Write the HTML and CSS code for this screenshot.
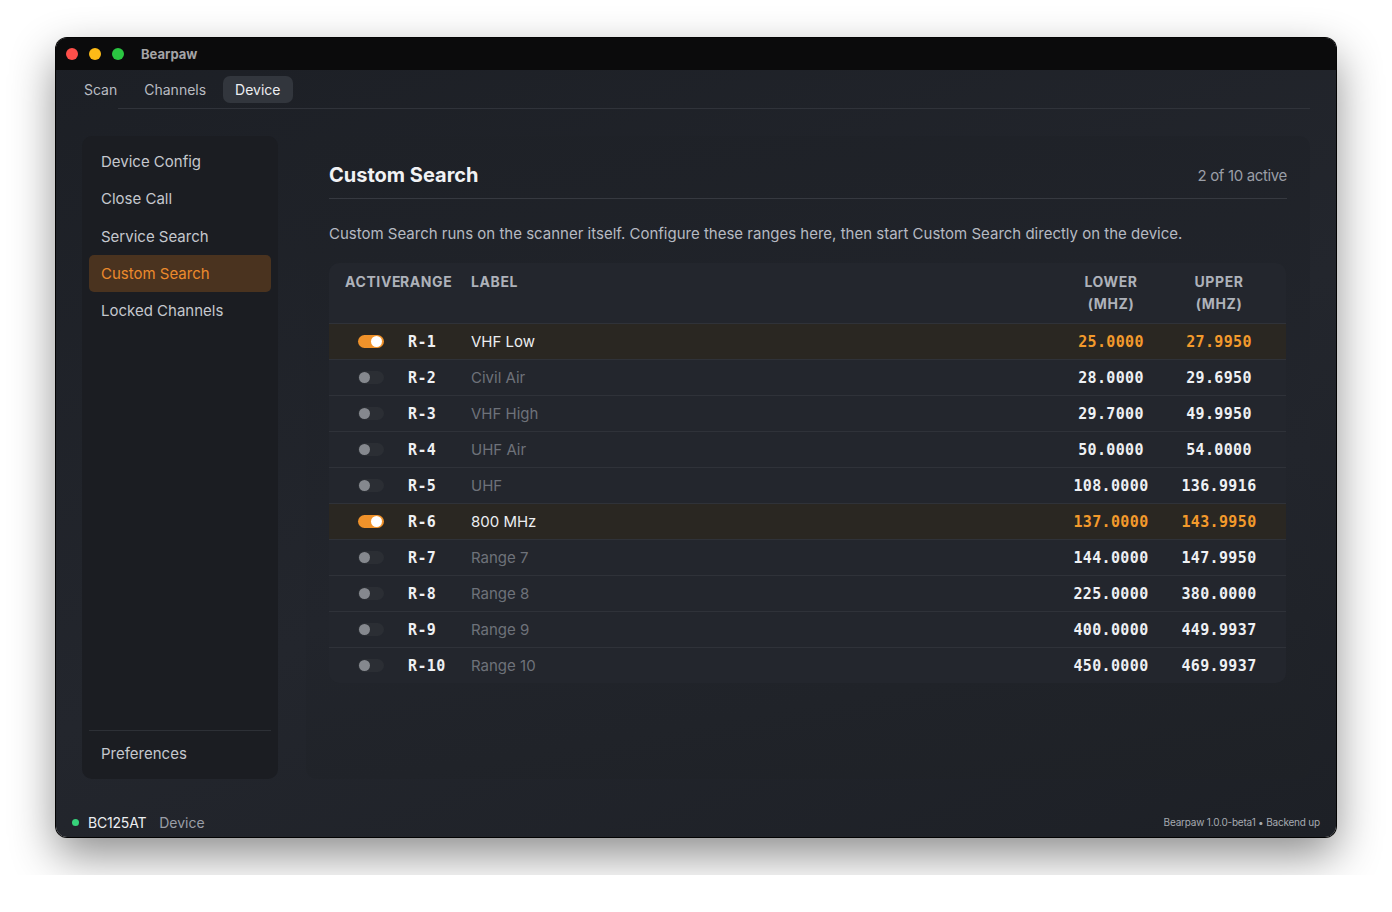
FILE: index.html
```html
<!DOCTYPE html>
<html lang="en">
  <head>
    <meta charset="UTF-8" />
    <meta name="viewport" content="width=device-width, initial-scale=1.0" />
    <title>Bearpaw</title>
    <link rel="stylesheet" href="styles.css">
  </head>
  <body>
    <div class="window">
      <div class="titlebar">
        <span class="light red"></span>
        <span class="light yellow"></span>
        <span class="light green"></span>
        <span class="app-name">Bearpaw</span>
      </div>

      <div class="tabs">
        <span class="tab">Scan</span>
        <span class="tab">Channels</span>
        <span class="tab active">Device</span>
      </div>

      <div class="content">
        <aside class="sidebar">
          <nav class="side-nav">
            <div class="side-item">Device Config</div>
            <div class="side-item">Close Call</div>
            <div class="side-item">Service Search</div>
            <div class="side-item active">Custom Search</div>
            <div class="side-item">Locked Channels</div>
          </nav>
          <div class="side-bottom">
            <div class="side-item">Preferences</div>
          </div>
        </aside>

        <main class="panel">
          <div class="panel-head">
            <h1>Custom Search</h1>
            <span class="count">2 of 10 active</span>
          </div>
          <p class="desc">Custom Search runs on the scanner itself. Configure these ranges here, then start Custom Search directly on the device.</p>

          <div class="ranges">
            <div class="row head">
              <span>Active</span>
              <span>Range</span>
              <span>Label</span>
              <span class="num">Lower<br />(MHz)</span>
              <span class="num">Upper<br />(MHz)</span>
            </div>
            <div id="rows"></div>
          </div>
        </main>
      </div>

      <div class="statusbar">
        <span class="dot"></span>
        <span class="device">BC125AT</span>
        <span class="mode">Device</span>
        <span class="version">Bearpaw 1.0.0-beta1 • Backend up</span>
      </div>
    </div>

    <script>
      const ranges = [
        { id: "R-1", label: "VHF Low", lower: "25.0000", upper: "27.9950", on: true },
        { id: "R-2", label: "Civil Air", lower: "28.0000", upper: "29.6950", on: false },
        { id: "R-3", label: "VHF High", lower: "29.7000", upper: "49.9950", on: false },
        { id: "R-4", label: "UHF Air", lower: "50.0000", upper: "54.0000", on: false },
        { id: "R-5", label: "UHF", lower: "108.0000", upper: "136.9916", on: false },
        { id: "R-6", label: "800 MHz", lower: "137.0000", upper: "143.9950", on: true },
        { id: "R-7", label: "Range 7", lower: "144.0000", upper: "147.9950", on: false },
        { id: "R-8", label: "Range 8", lower: "225.0000", upper: "380.0000", on: false },
        { id: "R-9", label: "Range 9", lower: "400.0000", upper: "449.9937", on: false },
        { id: "R-10", label: "Range 10", lower: "450.0000", upper: "469.9937", on: false },
      ];

      document.getElementById("rows").innerHTML = ranges
        .map(
          (r) => `
            <div class="row${r.on ? " on" : ""}">
              <span><span class="toggle"><span class="knob"></span></span></span>
              <span class="rid">${r.id}</span>
              <span class="label">${r.label}</span>
              <span class="num freq">${r.lower}</span>
              <span class="num freq">${r.upper}</span>
            </div>
          `
        )
        .join("");
    </script>
  </body>
</html>
```

FILE: styles.css
```css
body {
  margin: 0;
  padding: 38px 56px;
  background-color: #ffffff;
  font-family: Inter, "Noto Sans", sans-serif;
}

.window {
  height: 799px;
  display: flex;
  flex-direction: column;
  border-radius: 11px;
  overflow: hidden;
  background: linear-gradient(160deg, #1c1f25 0%, #23262d 55%, #1d2026 100%);
  box-shadow: 0 18px 45px rgba(0, 0, 0, 0.45), 0 0 0 1px #050505;
}

.titlebar {
  height: 32px;
  flex: none;
  display: flex;
  align-items: center;
  padding-left: 10px;
  background-color: #0b0b0c;
}

.light {
  width: 12px;
  height: 12px;
  border-radius: 50%;
  margin-right: 11px;
}

.red { background-color: #fe4f4a; }
.yellow { background-color: #fdbb17; }
.green { background-color: #2ac641; }

.app-name {
  margin-left: 6px;
  font-size: 13px;
  font-weight: 700;
  color: #a4a4a6;
}

.tabs {
  height: 39px;
  flex: none;
  display: flex;
  align-items: center;
  gap: 11px;
  margin: 0 26px 0 20px;
  position: relative;
}

/* underline starts a bit in from the left edge */
.tabs::after {
  content: "";
  position: absolute;
  left: 42px;
  right: 0;
  bottom: 0;
  height: 1px;
  background-color: #30333a;
}

.tab {
  padding: 5px 8px;
  font-size: 14px;
  color: #b9bcc2;
  border-radius: 7px;
}

.tab.active {
  margin-left: -2px;
  padding: 5px 12px;
  background-color: #32363d;
  color: #eceef1;
}

.content {
  flex: 1;
  display: flex;
  gap: 28px;
  padding: 27px 26px 0 26px;
  min-height: 0;
}

.sidebar {
  width: 196px;
  flex: none;
  display: flex;
  flex-direction: column;
  justify-content: space-between;
  padding: 7px 7px 7px;
  box-sizing: border-box;
  background-color: #1b1d22;
  border-radius: 10px;
}

.side-item {
  padding: 9px 12px;
  line-height: 19.3px;
  font-size: 15px;
  color: #c5c8ce;
  border-radius: 5px;
}

.side-item.active {
  background-color: #4a331f;
  color: #ec8a2c;
}

.side-bottom {
  border-top: 1px solid #2d3036;
  padding-top: 4px;
}

.panel {
  flex: 1;
  padding: 25px 23px 0 23px;
  background: linear-gradient(170deg, #1e2127 0%, #22252c 60%, #1e2126 100%);
  border-radius: 10px;
}

.panel-head {
  display: flex;
  align-items: center;
  justify-content: space-between;
  padding-bottom: 9px;
  border-bottom: 1px solid #363940;
}

.panel-head h1 {
  margin: 0;
  font-size: 20px;
  line-height: 28px;
  font-weight: 700;
  color: #f1f2f4;
}

.count {
  font-size: 15px;
  letter-spacing: -0.35px;
  color: #9a9ea6;
}

.desc {
  margin: 24px 0 18px;
  font-size: 15px;
  line-height: 22px;
  color: #b6bac2;
}

.ranges {
  margin-right: 1px;
  background-color: #23262d;
  border-radius: 10px;
  overflow: hidden;
}

.row {
  display: grid;
  grid-template-columns: 55px 71px 1fr 108px 108px;
  align-items: center;
  height: 36px;
  padding: 0 13px 0 16px;
  border-top: 1px solid #2f3239;
  box-sizing: border-box;
}

.row.head {
  height: 60px;
  padding-top: 8px;
  align-items: start;
  border-top: none;
  font-size: 14px;
  line-height: 22px;
  font-weight: 700;
  letter-spacing: 0.6px;
  text-transform: uppercase;
  color: #aeb2ba;
}

.num {
  text-align: center;
}

.row.on {
  background-color: #2a2722;
}

.toggle {
  display: block;
  width: 26px;
  height: 13px;
  margin-left: 13px;
  border-radius: 7px;
  background-color: #2b2e34;
  position: relative;
}

.knob {
  position: absolute;
  top: 1px;
  left: 1px;
  width: 11px;
  height: 11px;
  border-radius: 50%;
  background-color: #85888e;
}

.row.on .toggle {
  background-color: #f0922a;
}

.row.on .knob {
  left: auto;
  right: 2px;
  background-color: #ffffff;
}

.rid,
.freq {
  font-family: "DejaVu Sans Mono", "Liberation Mono", monospace;
  font-weight: 700;
  font-size: 15px;
  letter-spacing: 0.35px;
  color: #eef0f3;
}

.rid {
  padding-left: 8px;
}

.label {
  font-size: 15px;
  color: #6e727a;
}

.row.on .label {
  color: #eceef1;
}

.row.on .freq {
  color: #f39a2c;
}

.statusbar {
  height: 58px;
  flex: none;
  display: flex;
  align-items: center;
  padding: 28px 16px 0 16px;
  box-sizing: border-box;
}

.dot {
  width: 7px;
  height: 7px;
  border-radius: 50%;
  background-color: #36d27a;
  margin-right: 9px;
}

.device {
  font-size: 14px;
  letter-spacing: -0.2px;
  color: #eceef1;
}

.mode {
  margin-left: 13px;
  font-size: 14px;
  color: #9a9ea6;
}

.version {
  margin-left: auto;
  font-size: 10px;
  letter-spacing: -0.2px;
  color: #a6aab1;
}
```
